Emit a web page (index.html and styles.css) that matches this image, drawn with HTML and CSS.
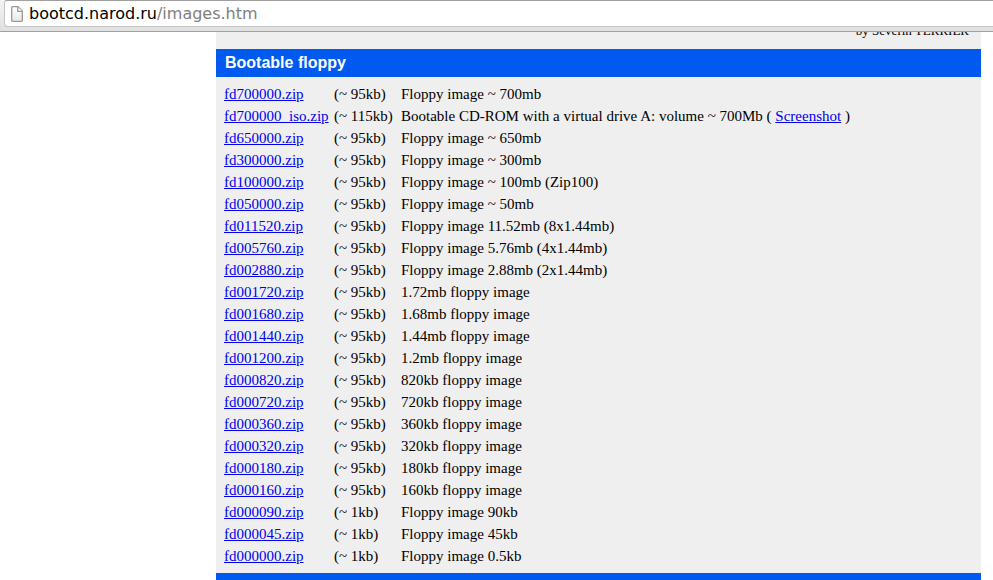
FILE: index.html
```html
<!DOCTYPE html>
<html lang="en">
<head>
<meta charset="utf-8">
<title>Bootable floppy images</title>
<link rel="stylesheet" href="styles.css">
</head>
<body>
<header class="toolbar">
  <div class="address">
    <svg class="page-icon" width="12" height="16" viewBox="0 0 12 16" aria-hidden="true">
      <defs>
        <linearGradient id="sheet" x1="0" y1="0" x2="0" y2="1">
          <stop offset="0" stop-color="#fff"/>
          <stop offset="1" stop-color="#e8e8e8"/>
        </linearGradient>
      </defs>
      <path d="M1.500 .7H7L11.300 5V14.500Q11.300 15.300 10.500 15.300H1.500Q.7 15.300 .7 14.500V1.500Q.7 .7 1.500 .7Z" fill="url(#sheet)" stroke="#999" stroke-width="1.300"/>
      <path d="M6.700 .7V5.300H11.300" fill="#fff" stroke="#999" stroke-width="1.300"/>
    </svg>
    <span class="url">bootcd.narod.ru<span class="path">/images.htm</span></span>
  </div>
</header>
<main class="viewport">
  <div class="content">
    <p class="byline">by Severin TERRIER</p>
    <h2 class="bar">Bootable floppy</h2>
    <table class="files">
      <colgroup><col class="name"><col class="size"><col></colgroup>
      <tbody>
        <tr><td><a href="#">fd700000.zip</a></td><td>(~ 95kb)</td><td>Floppy image ~ 700mb</td></tr>
        <tr><td><a href="#">fd700000_iso.zip</a></td><td>(~ 115kb)</td><td>Bootable CD-ROM with a virtual drive A: volume ~ 700Mb ( <a href="#">Screenshot</a> )</td></tr>
        <tr><td><a href="#">fd650000.zip</a></td><td>(~ 95kb)</td><td>Floppy image ~ 650mb</td></tr>
        <tr><td><a href="#">fd300000.zip</a></td><td>(~ 95kb)</td><td>Floppy image ~ 300mb</td></tr>
        <tr><td><a href="#">fd100000.zip</a></td><td>(~ 95kb)</td><td>Floppy image ~ 100mb (Zip100)</td></tr>
        <tr><td><a href="#">fd050000.zip</a></td><td>(~ 95kb)</td><td>Floppy image ~ 50mb</td></tr>
        <tr><td><a href="#">fd011520.zip</a></td><td>(~ 95kb)</td><td>Floppy image 11.52mb (8x1.44mb)</td></tr>
        <tr><td><a href="#">fd005760.zip</a></td><td>(~ 95kb)</td><td>Floppy image 5.76mb (4x1.44mb)</td></tr>
        <tr><td><a href="#">fd002880.zip</a></td><td>(~ 95kb)</td><td>Floppy image 2.88mb (2x1.44mb)</td></tr>
        <tr><td><a href="#">fd001720.zip</a></td><td>(~ 95kb)</td><td>1.72mb floppy image</td></tr>
        <tr><td><a href="#">fd001680.zip</a></td><td>(~ 95kb)</td><td>1.68mb floppy image</td></tr>
        <tr><td><a href="#">fd001440.zip</a></td><td>(~ 95kb)</td><td>1.44mb floppy image</td></tr>
        <tr><td><a href="#">fd001200.zip</a></td><td>(~ 95kb)</td><td>1.2mb floppy image</td></tr>
        <tr><td><a href="#">fd000820.zip</a></td><td>(~ 95kb)</td><td>820kb floppy image</td></tr>
        <tr><td><a href="#">fd000720.zip</a></td><td>(~ 95kb)</td><td>720kb floppy image</td></tr>
        <tr><td><a href="#">fd000360.zip</a></td><td>(~ 95kb)</td><td>360kb floppy image</td></tr>
        <tr><td><a href="#">fd000320.zip</a></td><td>(~ 95kb)</td><td>320kb floppy image</td></tr>
        <tr><td><a href="#">fd000180.zip</a></td><td>(~ 95kb)</td><td>180kb floppy image</td></tr>
        <tr><td><a href="#">fd000160.zip</a></td><td>(~ 95kb)</td><td>160kb floppy image</td></tr>
        <tr><td><a href="#">fd000090.zip</a></td><td>(~ 1kb)</td><td>Floppy image 90kb</td></tr>
        <tr><td><a href="#">fd000045.zip</a></td><td>(~ 1kb)</td><td>Floppy image 45kb</td></tr>
        <tr><td><a href="#">fd000000.zip</a></td><td>(~ 1kb)</td><td>Floppy image 0.5kb</td></tr>
      </tbody>
    </table>
    <div class="bar"></div>
  </div>
</main>
</body>
</html>
```
FILE: styles.css
```css
* {
  box-sizing: border-box;
}

body {
  margin: 0;
  height: 100vh;
  overflow: hidden;
  display: flex;
  flex-direction: column;
  background: #fff;
  color: #000;
  font: 15px/20px "Liberation Serif", serif;
}

.toolbar {
  flex: none;
  padding: 0 0 4px 4px;
  background: linear-gradient(#f4f4f4, #e0e0e0);
  border-bottom: 1px solid #a0a0a0;
}

.address {
  display: flex;
  align-items: center;
  gap: 6px;
  height: 27px;
  padding-left: 6px;
  background: #fff;
  border: 1px solid #c4c4c4;
  border-top-color: #a0a0a0;
  border-right: 0;
  border-radius: 3px 0 0 3px;
}

.url {
  font: 16px/20px "DejaVu Sans", sans-serif;
}

.path {
  color: #808080;
}

.viewport {
  flex: 1;
  min-height: 0;
  overflow: hidden;
}

.content {
  margin: -11px 12px 0 216px;
  background: #efefef;
}

.byline {
  margin: 0;
  padding: 0 12px 8px 0;
  font-size: 13px;
  text-align: right;
}

.bar {
  height: 28px;
  margin: 0;
  padding: 0 9px;
  background: #005af0;
  color: #fff;
  font: bold 16px/28px "Liberation Sans", sans-serif;
}

.files {
  margin: 0 6px;
  padding: 5px 0;
  border-spacing: 0 2px;
}

.name {
  width: 110px;
}

.size {
  width: 67px;
}

.files td {
  padding: 0 2px;
  white-space: nowrap;
}

.files a {
  color: #0000ee;
}
```
